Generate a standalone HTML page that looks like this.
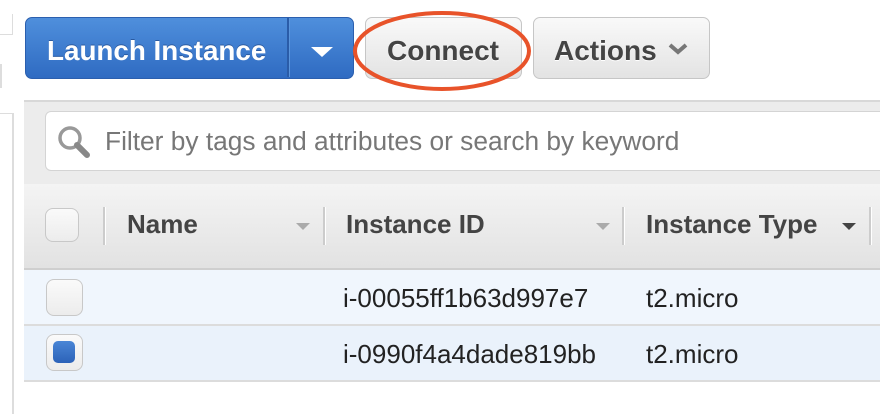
<!DOCTYPE html><html><head><style>
body{margin:0;width:880px;height:406px;background:#fff;position:relative;overflow:hidden;font-family:"Liberation Sans",sans-serif}
.a{position:absolute}
.btn{position:absolute;top:17px;height:62px;border-radius:7px;font-weight:bold;font-size:27.8px;box-sizing:border-box}
.g{background:linear-gradient(#f9f9f9,#e3e3e3);border:1.5px solid #c6c6c6;color:#444;text-shadow:0 1px 0 #fff}
.cb{position:absolute;width:34px;height:34px;border:1.5px solid #c8c8c8;border-radius:8px;background:linear-gradient(#fafafa,#ececec);box-sizing:border-box}
.h{position:absolute;top:209px;font-weight:bold;font-size:26px;color:#444}
.sep{position:absolute;top:207px;width:2px;height:38px;background:#ccc;border-right:1px solid #fff}
.tri{position:absolute;width:0;height:0;border-left:7px solid transparent;border-right:7px solid transparent;border-top:7px solid #aaa}
.td{position:absolute;font-size:26px;color:#222}
</style></head><body>
<div class="a" style="left:0;top:14px;width:12px;height:20px;border-right:1px solid #ddd;border-bottom:1px solid #ddd"></div>
<div class="a" style="left:0;top:64px;width:2px;height:24px;background:#ddd"></div>
<div class="a" style="left:0;top:113px;width:12px;height:300px;border-right:2px solid #ddd;border-top:1px solid #ddd"></div>
<div class="btn" style="left:25px;width:329px;background:linear-gradient(#4f8fdc,#2f6bc2);border:1.5px solid #2b5fae;color:#fff;text-shadow:0 -1px 0 #2a5aa0">
<span class="a" style="left:21px;top:17px">Launch Instance</span>
<div class="a" style="left:261px;top:0;width:2px;height:59px;background:#2a5ca8;border-right:1px solid #5b95dc"></div>
<div class="a" style="left:285px;top:29px;border-left:11px solid transparent;border-right:11px solid transparent;border-top:10px solid #fff"></div>
</div>
<div class="btn g" style="left:365px;width:157px"><span class="a" style="left:21px;top:17px;font-size:28px">Connect</span></div>
<div class="btn g" style="left:533px;width:177px"><span class="a" style="left:20px;top:17px;font-size:28px">Actions</span>
<svg class="a" style="left:134px;top:25px" width="20" height="12"><path d="M2 2 L10 9 L18 2" stroke="#777" stroke-width="4" fill="none"/></svg></div>
<svg class="a" style="left:350px;top:8px" width="184" height="86"><ellipse cx="92" cy="43" rx="87" ry="38" fill="none" stroke="#e8532a" stroke-width="4"/></svg>
<div class="a" style="left:24px;top:100px;width:856px;height:82px;background:#ececec;border-top:2px solid #d8d8d8;border-bottom:2px solid #d4d4d4"></div>
<div class="a" style="left:45px;top:111px;width:850px;height:60px;background:#fff;border:1.5px solid #d4d4d4;border-radius:6px;box-sizing:border-box"></div>
<svg class="a" style="left:56px;top:124px" width="38" height="38"><circle cx="14" cy="14" r="10" fill="none" stroke="#999" stroke-width="3.5"/><path d="M21 21 L31 31" stroke="#888" stroke-width="6" stroke-linecap="round"/></svg>
<div class="a" style="left:105px;top:126px;font-size:26.3px;color:#777">Filter by tags and attributes or search by keyword</div>
<div class="a" style="left:24px;top:184px;width:856px;height:84px;background:linear-gradient(#f4f4f4,#e2e2e2);border-bottom:2px solid #cfcfcf"></div>
<div class="cb" style="left:45px;top:208px"></div>
<div class="sep" style="left:103px"></div><div class="sep" style="left:323px"></div><div class="sep" style="left:622px"></div><div class="sep" style="left:869px"></div>
<div class="h" style="left:127px">Name</div><div class="tri" style="left:296px;top:223px"></div>
<div class="h" style="left:346px">Instance ID</div><div class="tri" style="left:596px;top:223px"></div>
<div class="h" style="left:646px">Instance Type</div><div class="tri" style="left:842px;top:223px;border-top-color:#444"></div>
<div class="a" style="left:24px;top:270px;width:856px;height:54px;background:#f0f6fd;border-bottom:2px solid #dcdcdc"></div>
<div class="a" style="left:24px;top:326px;width:856px;height:54px;background:#eaf2fb;border-bottom:2px solid #dcdcdc"></div>
<div class="cb" style="left:46px;top:279px;width:37px;height:37px"></div>
<div class="cb" style="left:46px;top:334px;width:37px;height:37px"><div class="a" style="left:6px;top:6px;width:22px;height:22px;border-radius:5px;background:linear-gradient(#4a86d6,#2c62b8)"></div></div>
<div class="td" style="left:343px;top:283px">i-00055ff1b63d997e7</div><div class="td" style="left:646px;top:283px">t2.micro</div>
<div class="td" style="left:343px;top:339px">i-0990f4a4dade819bb</div><div class="td" style="left:646px;top:339px">t2.micro</div>
</body></html>
